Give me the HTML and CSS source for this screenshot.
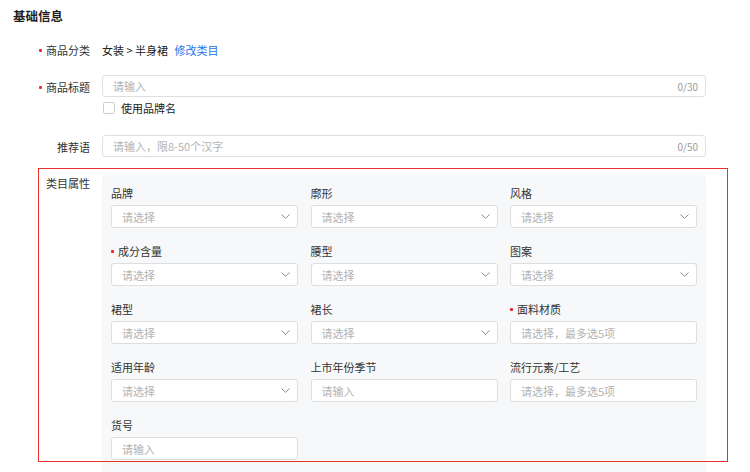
FILE: index.html
```html
<!DOCTYPE html>
<html lang="zh-CN">
<head>
<meta charset="utf-8">
<title>基础信息</title>
<link rel="stylesheet" href="styles.css">
</head>
<body>
<div class="page">
  <div class="title">基础信息</div>

  <div class="row row-cat">
    <div class="label"><span class="req"></span>商品分类</div>
    <div class="content cat">
      <span class="cat-value">女装 &gt; 半身裙</span>
      <a class="link">修改类目</a>
    </div>
  </div>

  <div class="row row-title">
    <div class="label"><span class="req"></span>商品标题</div>
    <div class="content">
      <div class="input wide"><span class="ph">请输入</span><span class="count">0/30</span></div>
    </div>
  </div>

  <div class="row row-check">
    <div class="label"></div>
    <div class="content check">
      <span class="box"></span><span class="check-text">使用品牌名</span>
    </div>
  </div>

  <div class="row row-rec">
    <div class="label">推荐语</div>
    <div class="content">
      <div class="input wide"><span class="ph">请输入，限8-50个汉字</span><span class="count">0/50</span></div>
    </div>
  </div>

  <div class="row row-attr">
    <div class="label attr-label">类目属性</div>
    <div class="panel">
      <div class="grid">
        <div class="item"><div class="ilabel">品牌</div><div class="input sel"><span class="ph">请选择</span><svg class="chev" width="9" height="5" viewBox="0 0 9 5"><polyline points="0.5,0.5 4.5,4.3 8.5,0.5" fill="none" stroke="#8a8a8a" stroke-width="1"/></svg></div></div>
        <div class="item"><div class="ilabel">廓形</div><div class="input sel"><span class="ph">请选择</span><svg class="chev" width="9" height="5" viewBox="0 0 9 5"><polyline points="0.5,0.5 4.5,4.3 8.5,0.5" fill="none" stroke="#8a8a8a" stroke-width="1"/></svg></div></div>
        <div class="item"><div class="ilabel">风格</div><div class="input sel"><span class="ph">请选择</span><svg class="chev" width="9" height="5" viewBox="0 0 9 5"><polyline points="0.5,0.5 4.5,4.3 8.5,0.5" fill="none" stroke="#8a8a8a" stroke-width="1"/></svg></div></div>

        <div class="item"><div class="ilabel"><span class="req"></span>成分含量</div><div class="input sel"><span class="ph">请选择</span><svg class="chev" width="9" height="5" viewBox="0 0 9 5"><polyline points="0.5,0.5 4.5,4.3 8.5,0.5" fill="none" stroke="#8a8a8a" stroke-width="1"/></svg></div></div>
        <div class="item"><div class="ilabel">腰型</div><div class="input sel"><span class="ph">请选择</span><svg class="chev" width="9" height="5" viewBox="0 0 9 5"><polyline points="0.5,0.5 4.5,4.3 8.5,0.5" fill="none" stroke="#8a8a8a" stroke-width="1"/></svg></div></div>
        <div class="item"><div class="ilabel">图案</div><div class="input sel"><span class="ph">请选择</span><svg class="chev" width="9" height="5" viewBox="0 0 9 5"><polyline points="0.5,0.5 4.5,4.3 8.5,0.5" fill="none" stroke="#8a8a8a" stroke-width="1"/></svg></div></div>

        <div class="item"><div class="ilabel">裙型</div><div class="input sel"><span class="ph">请选择</span><svg class="chev" width="9" height="5" viewBox="0 0 9 5"><polyline points="0.5,0.5 4.5,4.3 8.5,0.5" fill="none" stroke="#8a8a8a" stroke-width="1"/></svg></div></div>
        <div class="item"><div class="ilabel">裙长</div><div class="input sel"><span class="ph">请选择</span><svg class="chev" width="9" height="5" viewBox="0 0 9 5"><polyline points="0.5,0.5 4.5,4.3 8.5,0.5" fill="none" stroke="#8a8a8a" stroke-width="1"/></svg></div></div>
        <div class="item"><div class="ilabel"><span class="req"></span>面料材质</div><div class="input"><span class="ph">请选择，最多选5项</span></div></div>

        <div class="item"><div class="ilabel">适用年龄</div><div class="input sel"><span class="ph">请选择</span><svg class="chev" width="9" height="5" viewBox="0 0 9 5"><polyline points="0.5,0.5 4.5,4.3 8.5,0.5" fill="none" stroke="#8a8a8a" stroke-width="1"/></svg></div></div>
        <div class="item"><div class="ilabel">上市年份季节</div><div class="input"><span class="ph">请输入</span></div></div>
        <div class="item"><div class="ilabel">流行元素/工艺</div><div class="input"><span class="ph">请选择，最多选5项</span></div></div>

        <div class="item"><div class="ilabel">货号</div><div class="input"><span class="ph">请输入</span></div></div>
      </div>
    </div>
    <div class="highlight"></div>
  </div>
</div>
</body>
</html>
```

FILE: styles.css
```css
html, body {
  margin: 0;
  padding: 0;
  background: #ffffff;
  overflow: hidden;
}

body {
  font-family: "Noto Sans CJK SC", "Noto Sans", sans-serif;
  font-size: 11px;
  color: #333333;
  width: 750px;
  height: 472px;
}

.page {
  display: flex;
  flex-direction: column;
}

.title {
  height: 32px;
  line-height: 32px;
  padding-left: 13px;
  font-size: 12.5px;
  font-weight: 700;
  color: #1f1f1f;
}

.row {
  display: flex;
  gap: 12px;
}

.label {
  width: 90px;
  flex: 0 0 90px;
  text-align: right;
  color: #333333;
  white-space: nowrap;
}

.req {
  display: inline-block;
  width: 3px;
  height: 3px;
  background: #f5222d;
  border-radius: 1px;
  margin-right: 4px;
  vertical-align: middle;
  position: relative;
  top: -2px;
}

.content {
  flex: 0 0 604px;
  width: 604px;
}

.row-cat {
  margin-top: 7px;
  height: 22px;
  line-height: 22px;
}

.cat-value {
  color: #222222;
}

.link {
  color: #1f6ff0;
  margin-left: 4px;
  cursor: pointer;
}

.row-title {
  margin-top: 14px;
  height: 22px;
}

.row-title .label,
.row-rec .label {
  line-height: 24px;
  height: 22px;
}

.input {
  box-sizing: border-box;
  height: 23px;
  background: #ffffff;
  border: 1px solid #dedede;
  border-radius: 3px;
  display: flex;
  align-items: center;
  justify-content: space-between;
  padding: 0 7px 0 10px;
}

.input.wide {
  height: 22px;
}

.ph {
  color: #b3b3b3;
  white-space: nowrap;
}

.count {
  color: #9a9a9a;
  font-size: 10px;
}

.row-check {
  margin-top: 3px;
  height: 16px;
  line-height: 16px;
}

.check {
  display: flex;
  align-items: center;
}

.box {
  box-sizing: border-box;
  width: 12px;
  height: 12px;
  border: 1px solid #cfcfcf;
  border-radius: 2px;
  background: #fff;
  margin-left: 1px;
  margin-right: 6px;
}

.check-text {
  color: #222222;
}

.row-rec {
  margin-top: 19px;
  height: 22px;
}

.row-attr {
  margin-top: 18px;
  position: relative;
  gap: 11px;
}

.attr-label {
  line-height: 16px;
  padding-right: 1px;
  box-sizing: border-box;
  width: 91px;
  flex-basis: 91px;
}

.panel {
  flex: 0 0 604px;
  width: 604px;
  background: #f7f8fa;
  border-radius: 4px 4px 0 0;
  box-sizing: border-box;
  padding: 9px 9px 20px 9px;
}

.grid {
  display: grid;
  grid-template-columns: 187px 187px 187px;
  column-gap: 12.5px;
  row-gap: 14px;
}

.ilabel {
  line-height: 18px;
  height: 18px;
  margin-bottom: 3px;
  color: #333333;
  white-space: nowrap;
}

.sel {
  padding-right: 7px;
}

.chev {
  display: block;
  flex: 0 0 auto;
}

.highlight {
  position: absolute;
  left: 38px;
  top: -7px;
  width: 690px;
  height: 294px;
  box-sizing: border-box;
  border: 1px solid #e8302c;
  pointer-events: none;
}
```
